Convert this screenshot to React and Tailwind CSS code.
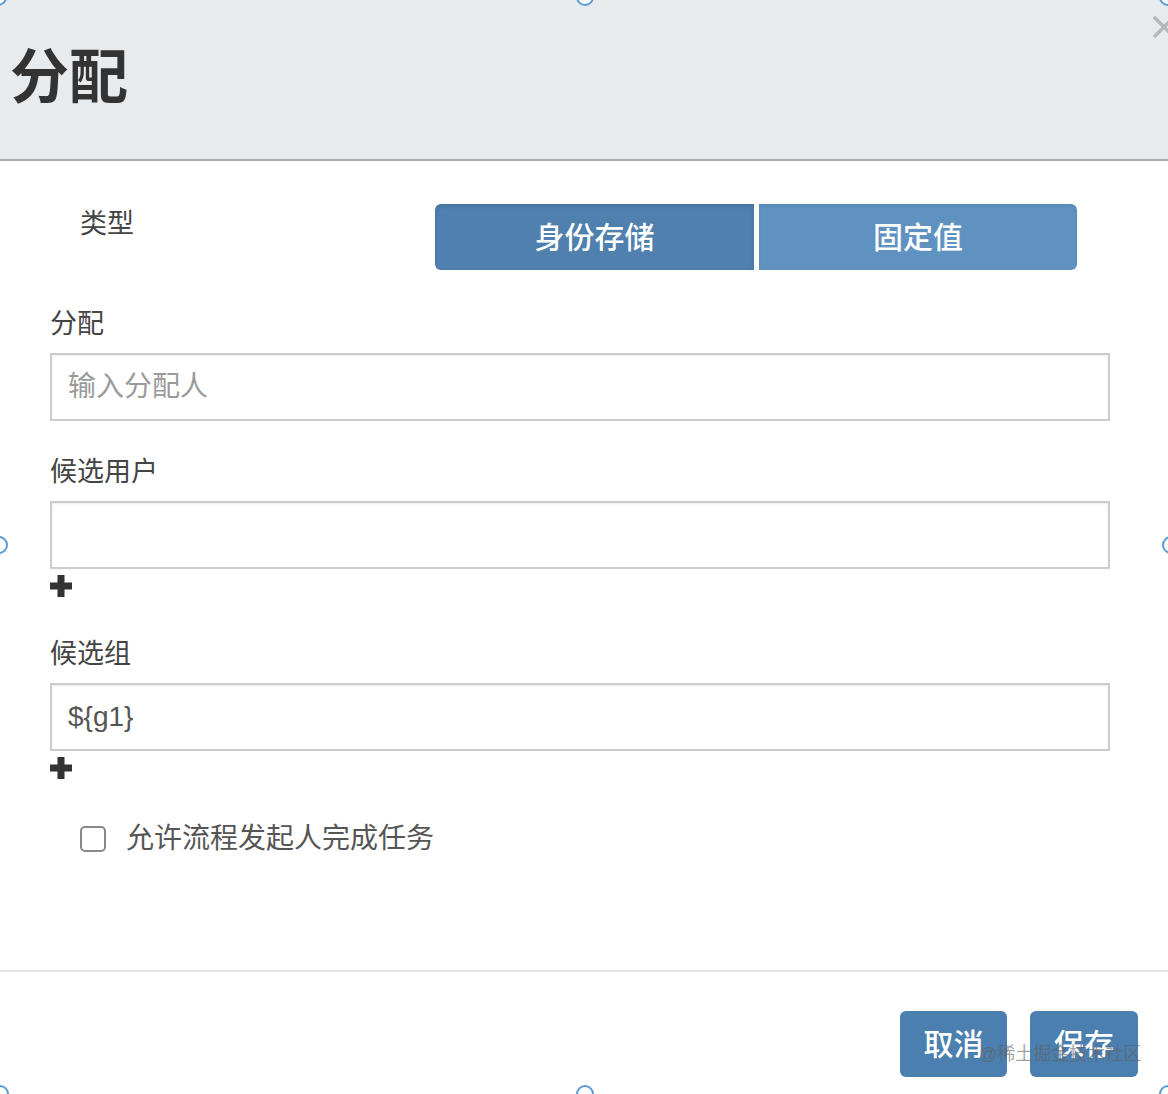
import React from "react";

function Plus() {
  return (
    <svg width="22" height="22" viewBox="0 0 22 22" className="block">
      <rect x="7.5" y="0" width="7" height="22" fill="#333" />
      <rect x="0" y="7.5" width="22" height="7" fill="#333" />
    </svg>
  );
}

function Handle({ className }) {
  return (
    <div
      className={`absolute w-[18px] h-[18px] -ml-[9px] -mt-[9px] rounded-full border-2 border-[#5b9bd5] bg-white ${className}`}
    ></div>
  );
}

function Field({ label, placeholder, value, mt }) {
  return (
    <div className={mt}>
      <div className="text-[27px] leading-[38px] text-[#444]">{label}</div>
      <div className="mt-[10px] h-[68px] border-2 border-[#cdcdcd] shadow-[inset_0_1px_2px_rgba(0,0,0,0.08)] flex items-center pl-[16px] text-[28px]">
        {value ? (
          <span className="text-[#555]">{value}</span>
        ) : (
          <span className="text-[#9a9a9a]">{placeholder}</span>
        )}
      </div>
    </div>
  );
}

export default function App() {
  return (
    <div
      className="relative w-[1168px] h-[1094px] overflow-hidden bg-white flex flex-col"
      style={{ fontFamily: '"Liberation Sans", "Noto Sans CJK SC", sans-serif' }}
    >
      {/* Header */}
      <div className="h-[161px] shrink-0 bg-[#e8ebee] border-b-2 border-[#a9acaf] flex items-center pl-[10px]">
        <h1 className="text-[59px] font-bold text-[#333] leading-none -mt-[2px]">分配</h1>
      </div>
      <svg width="24" height="24" viewBox="0 0 24 24" className="absolute left-[1152px] top-[15px]">
        <path d="M2 2 L22 22 M22 2 L2 22" stroke="#b5b7b9" strokeWidth="3.5" />
      </svg>

      {/* Body */}
      <div className="flex-1 pl-[50px] pr-[58px]">
        <div className="mt-[42px] flex items-start">
          <div className="w-[385px] pl-[30px] pt-[2px] text-[27px] leading-[38px] text-[#444]">类型</div>
          <div className="mt-px flex gap-[5px]">
            <button className="w-[319px] h-[66px] rounded-l-[6px] bg-[#4f80ae] text-white text-[30px] font-medium shadow-[inset_0_2px_4px_rgba(0,0,0,0.12)]">
              身份存储
            </button>
            <button className="w-[318px] h-[66px] rounded-r-[6px] bg-[#5f92c1] text-white text-[30px] font-medium shadow-[inset_0_2px_3px_rgba(0,0,0,0.06)]">
              固定值
            </button>
          </div>
        </div>

        <Field label="分配" placeholder="输入分配人" mt="mt-[35px]" />
        <Field label="候选用户" mt="mt-[32px]" />
        <div className="mt-[6px]">
          <Plus />
        </div>
        <Field label="候选组" value="${g1}" mt="mt-[38px]" />
        <div className="mt-[6px]">
          <Plus />
        </div>

        <div className="mt-[41px] pl-[30px] flex items-center gap-[20px] h-[38px]">
          <div className="w-[26px] h-[26px] rounded-[5px] border-2 border-[#888] bg-white"></div>
          <span className="text-[28px] text-[#555]">允许流程发起人完成任务</span>
        </div>
      </div>

      {/* Footer */}
      <div className="h-[124px] shrink-0 border-t-2 border-[#e6e6e6] flex justify-end items-start pt-[39px] pr-[30px] gap-[23px]">
        <button className="w-[107px] h-[66px] rounded-[6px] bg-[#4b7fb0] text-white text-[30px] font-medium">
          取消
        </button>
        <button className="w-[108px] h-[66px] rounded-[6px] bg-[#4b7fb0] text-white text-[30px] font-medium">
          保存
        </button>
      </div>

      {/* Watermark */}
      <div className="absolute z-10 left-[979px] top-[1041px] text-[18px] text-[rgba(95,95,95,0.6)] whitespace-nowrap">
        @稀土掘金技术社区
      </div>

      {/* Resize handles */}
      <Handle className="left-[-2px] top-[-3px]" />
      <Handle className="left-[585px] top-[-3px]" />
      <Handle className="left-[1168px] top-[-3px]" />
      <Handle className="left-[-1px] top-[545px]" />
      <Handle className="left-[1171px] top-[545px]" />
      <Handle className="left-[0px] top-[1094px]" />
      <Handle className="left-[585px] top-[1094px]" />
      <Handle className="left-[1168px] top-[1094px]" />
    </div>
  );
}
